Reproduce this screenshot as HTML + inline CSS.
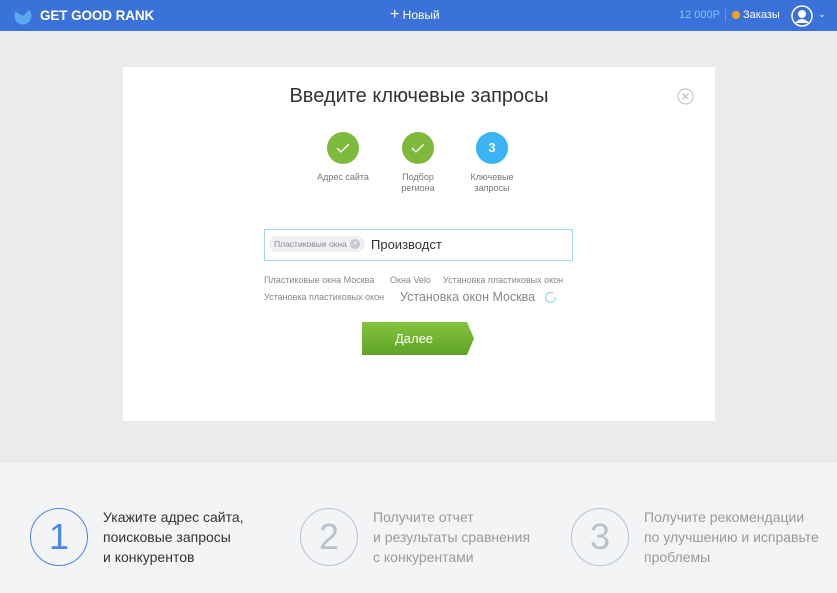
<!DOCTYPE html>
<html><head><meta charset="utf-8"><style>
*{margin:0;padding:0;box-sizing:border-box}
body{width:837px;height:593px;overflow:hidden;font-family:"Liberation Sans",sans-serif;background:#ebebed;position:relative}
.hdr{position:absolute;left:0;top:0;width:837px;height:31px;background:#3a72d9;color:#fff}
.abs{position:absolute}
.card{position:absolute;left:123px;top:67px;width:592px;height:354px;background:#fff}
.bottom{position:absolute;left:0;top:461px;width:837px;height:132px;background:#f3f4f6;border-top:1px solid #e0e0e0}
.circ{position:absolute;width:32px;height:32px;border-radius:50%;color:#fff;text-align:center;line-height:32px;font-size:13px;font-weight:bold}
.lbl{position:absolute;font-size:9px;color:#777;text-align:center;width:80px;line-height:11px}
.sug{position:absolute;font-size:9px;color:#888}
.big{position:absolute;width:58px;height:58px;border-radius:50%;border:1.5px solid #b9c2cc;color:#b9c2cc;font-size:36px;text-align:center;line-height:55px;font-weight:300}
.bt{position:absolute;font-size:14px;line-height:20px;color:#999}
</style></head><body>
<div class="hdr">
 <svg class="abs" style="left:14px;top:7px" width="18" height="18" viewBox="0 0 18 18"><circle cx="9" cy="9" r="8.5" fill="#5aa8ee"/><path d="M2 5 A8 8 0 0 1 15 3 L9 9 Z" fill="#3a72d9"/></svg>
 <div class="abs" style="left:40px;top:8px;font-size:13.5px;font-weight:bold;letter-spacing:-0.1px">GET GOOD RANK</div>
 <div class="abs" style="left:390px;top:8px;font-size:12px"><span style="font-size:16px;line-height:12px">+</span> Новый</div>
 <div class="abs" style="left:679px;top:9px;font-size:11px;color:#7ec2ff">12 000Р</div>
 <div class="abs" style="left:725px;top:9px;width:1px;height:13px;background:#6a93e0"></div>
 <div class="abs" style="left:732px;top:11px;width:8px;height:8px;border-radius:50%;background:#f7a21c"></div>
 <div class="abs" style="left:743px;top:9px;font-size:11px">Заказы</div>
 <svg class="abs" style="left:791px;top:5px" width="22" height="22" viewBox="0 0 22 22"><circle cx="11" cy="11" r="10" fill="none" stroke="#fff" stroke-width="1.5"/><circle cx="11" cy="9" r="4" fill="#fff"/><path d="M4 18 Q11 10 18 18" fill="#fff"/></svg>
 <div class="abs" style="left:818px;top:9px;font-size:9px">⌄</div>
</div>
<div class="card">
 <div class="abs" style="left:0;width:592px;top:18px;text-align:center;font-size:20px;color:#333">Введите ключевые запросы</div>
 <svg class="abs" style="left:554px;top:21px" width="17" height="17" viewBox="0 0 17 17"><circle cx="8.5" cy="8.5" r="7.5" fill="none" stroke="#bbb"/><path d="M5.5 5.5L11.5 11.5M11.5 5.5L5.5 11.5" stroke="#bbb"/></svg>
 <div class="circ" style="left:204px;top:65px;background:#7dba3c"><svg width="32" height="32"><path d="M10 16l4 4 8-8" stroke="#fff" stroke-width="1.3" fill="none"/></svg></div>
 <div class="circ" style="left:279px;top:65px;background:#7dba3c"><svg width="32" height="32"><path d="M10 16l4 4 8-8" stroke="#fff" stroke-width="1.3" fill="none"/></svg></div>
 <div class="circ" style="left:353px;top:65px;background:#3ab4f2">3</div>
 <div class="lbl" style="left:180px;top:105px">Адрес сайта</div>
 <div class="lbl" style="left:255px;top:105px">Подбор<br>региона</div>
 <div class="lbl" style="left:329px;top:105px">Ключевые<br>запросы</div>
 <div class="abs" style="left:141px;top:162px;width:309px;height:32px;border:1.5px solid #9fd6f2"></div>
 <div class="abs" style="left:146px;top:169px;height:16px;width:96px;border-radius:8px;background:#eef0f3;font-size:8.5px;color:#888;line-height:16px;padding-left:5px">Пластиковые окна</div>
 <div class="abs" style="left:227px;top:172px;width:10px;height:10px;border-radius:50%;background:#c5c9cf;color:#fff;font-size:8px;line-height:10px;text-align:center">×</div>
 <div class="abs" style="left:248px;top:170px;font-size:13px;color:#333">Производст</div>
 <div class="sug" style="left:141px;top:208px">Пластиковые окна Москва</div>
 <div class="sug" style="left:267px;top:208px">Окна Velo</div>
 <div class="sug" style="left:320px;top:208px">Установка пластиковых окон</div>
 <div class="sug" style="left:141px;top:225px">Установка пластиковых окон</div>
 <div class="sug" style="left:277px;top:223px;font-size:12.5px">Установка окон Москва</div>
 <svg class="abs" style="left:421px;top:224px" width="13" height="13"><circle cx="6.5" cy="6.5" r="5" fill="none" stroke="#9fd6f2" stroke-width="1.3" stroke-dasharray="26 6"/></svg>
 <svg class="abs" style="left:239px;top:255px" width="112" height="33" viewBox="0 0 112 33"><defs><linearGradient id="g" x1="0" y1="0" x2="0" y2="1"><stop offset="0" stop-color="#86c440"/><stop offset="1" stop-color="#5fa326"/></linearGradient></defs><path d="M0 0H105L112 16.5L105 33H0Z" fill="url(#g)"/></svg>
 <div class="abs" style="left:239px;top:264px;width:104px;text-align:center;color:#fff;font-size:13px">Далее</div>
</div>
<div class="bottom">
 <div class="big" style="left:30px;top:46px;border-color:#4a86e8;color:#4a86e8">1</div>
 <div class="bt" style="left:103px;top:45px;color:#333">Укажите адрес сайта,<br>поисковые запросы<br>и конкурентов</div>
 <div class="big" style="left:300px;top:46px">2</div>
 <div class="bt" style="left:373px;top:45px">Получите отчет<br>и результаты сравнения<br>с конкурентами</div>
 <div class="big" style="left:571px;top:46px">3</div>
 <div class="bt" style="left:644px;top:45px">Получите рекомендации<br>по улучшению и исправьте<br>проблемы</div>
</div>
</body></html>
